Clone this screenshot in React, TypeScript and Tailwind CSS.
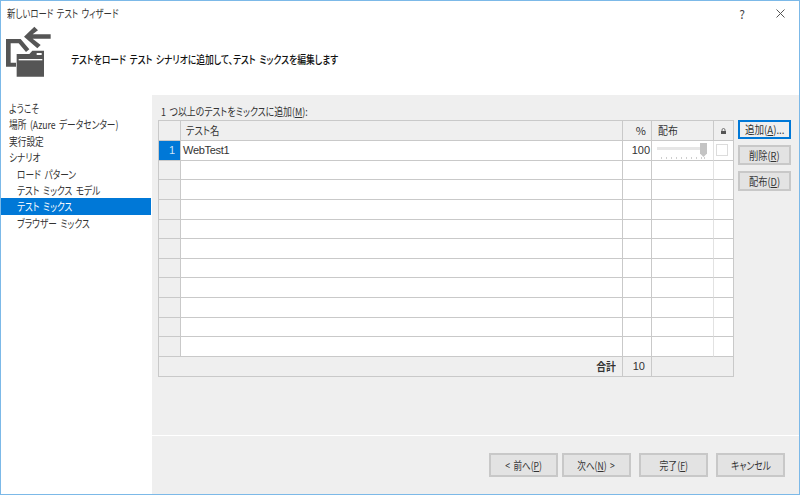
import React from "react";

const cols = "grid-cols-[22px_442px_29px_62px_20px]";

function Btn({ children, primary, className = "", fit = "scale-x-[0.8]" }: { children: React.ReactNode; primary?: boolean; className?: string; fit?: string }) {
  return (
    <div className={`flex items-center justify-center border-2 text-[11px] text-[#333] whitespace-nowrap ${primary ? "border-[#0078d7] bg-[#efefef]" : "border-[#c8c8c8] bg-[#e3e3e3]"} ${className}`}>
      <span className={`inline-block ${fit}`}>{children}</span>
    </div>
  );
}

function Cell({ className = "", children }: { className?: string; children?: React.ReactNode }) {
  return <div className={`border-r border-b min-h-0 overflow-hidden text-[11px] text-[#333] ${className.includes("border-r-") ? "border-b-[#c9c9c9]" : "border-[#c9c9c9]"} ${className}`}>{children}</div>;
}

function NavItem({ children, indent, active }: { children: React.ReactNode; indent?: boolean; active?: boolean }) {
  return (
    <div className={`h-[16.4px] leading-[16px] text-[11px] whitespace-nowrap ${indent ? "pl-[16px]" : "pl-[8px]"} ${active ? "bg-[#0078d7] text-white" : "text-[#333]"}`}>
      <span className="inline-block origin-left scale-x-[0.79]">{children}</span>
    </div>
  );
}

export default function App() {
  const rows = Array.from({ length: 10 });
  return (
    <div className="w-[800px] h-[495px] overflow-hidden border border-[#7cb9e8] bg-white flex flex-col [word-spacing:2px] [font-feature-settings:'palt'] font-['Noto_Sans_CJK_JP','Liberation_Sans',sans-serif]">
      <div className="h-[94px] shrink-0 flex flex-col relative">
        <div className="h-[25px] flex items-center pl-[6px] text-[11px] text-[#333]">
          <span className="inline-block origin-left scale-x-[0.76]">新しいロード テスト ウィザード</span>
          <div className="ml-auto flex items-center">
            <span className="text-[12px] text-[#444] mr-[31px]">?</span>
            <svg width="9" height="9" viewBox="0 0 9 9" className="mr-[14px]"><path d="M0.5 0.5 L8.5 8.5 M8.5 0.5 L0.5 8.5" stroke="#555" strokeWidth="1" fill="none" /></svg>
          </div>
        </div>
        <div className="flex items-start">
          <svg width="48" height="52" viewBox="15 18 144 156" className="ml-[4px] shrink-0">
            <path d="M72 50 L103 20 L114 31 L98 43 H152 V56 H98 L122 75 L112 85 Z" fill="#555" />
            <path d="M18 57 H62 L88 88 L78 96 L56 70 H32 V128 H48 V140 H18 Z" fill="#555" />
            <path d="M50 102 H88 L97 92 H132 V170 H50 Z" fill="#555" />
            <rect x="56" y="117" width="71" height="4" fill="#fff" />
            <rect x="110" y="99" width="15" height="6" fill="#fff" />
          </svg>
          <div className="ml-[18px] mt-[25px] text-[11px] font-medium text-[#111] whitespace-nowrap origin-left scale-x-[0.8]">テストをロード テスト シナリオに追加して、テスト ミックスを編集します</div>
        </div>
      </div>
      <div className="flex-1 flex min-h-0">
        <div className="w-[150px] shrink-0 pt-[5px]">
          <NavItem>ようこそ</NavItem>
          <NavItem>場所 (Azure データセンター)</NavItem>
          <NavItem>実行設定</NavItem>
          <NavItem>シナリオ</NavItem>
          <NavItem indent>ロード パターン</NavItem>
          <NavItem indent>テスト ミックス モデル</NavItem>
          <NavItem indent active>テスト ミックス</NavItem>
          <NavItem indent>ブラウザー ミックス</NavItem>
        </div>
        <div className="flex-1 ml-[1px] bg-[#efefef] flex flex-col min-w-0">
          <div className="h-[341px] shrink-0 pl-[6px] flex flex-col border-b border-white">
            <div className="h-[25px] pl-[3px] pt-[8px] text-[11px] leading-[16px] text-[#333] whitespace-nowrap">
              <span className="inline-block origin-left scale-x-[0.81]">1 つ以上のテストをミックスに追加(<span className="underline">M</span>):</span>
            </div>
            <div className="flex">
              <div className={`w-[576px] h-[257px] grid ${cols} grid-rows-[20px_repeat(11,1fr)_20px] border-l border-t border-[#c9c9c9] bg-white`}>
                <Cell className="bg-[#efefef]" />
                <Cell className="bg-[#efefef] pl-[5px] leading-[18px]"><span className="inline-block origin-left scale-x-[0.85]">テスト名</span></Cell>
                <Cell className="bg-[#efefef] text-right pr-[5px] leading-[18px]">%</Cell>
                <Cell className="bg-[#efefef] pl-[6px] leading-[18px]"><span className="inline-block origin-left scale-x-[0.9]">配布</span></Cell>
                <Cell className="bg-[#efefef] flex items-center justify-center">
                  <svg width="5" height="6" viewBox="0 0 5 6"><path d="M1 3V2a1.5 1.5 0 0 1 3 0V3" stroke="#555" fill="none" strokeWidth="0.8" /><rect x="0" y="3" width="5" height="3" fill="#555" /></svg>
                </Cell>

                <Cell className="bg-[#0078d7] text-[#cfe4f7] text-right pr-[5px] leading-[19px] text-[10px] font-['Liberation_Sans']">1</Cell>
                <Cell className="pl-[2px] leading-[19px] font-['Liberation_Sans'] text-[10px] tracking-[-0.3px]">WebTest1</Cell>
                <Cell className="text-right pr-[1px] leading-[19px] font-['Liberation_Sans'] text-[10.5px]">100</Cell>
                <Cell className="relative border-r-[#e2e2e2]">
                  <div className="absolute left-[5px] top-[6px] w-[46px] h-[3px] bg-[#e6e6e6]" />
                  <div className="absolute left-[48px] top-[2px] w-[7px] h-[14px] bg-[#c4c4c4] [clip-path:polygon(0_0,100%_0,100%_75%,50%_100%,0_75%)]" />
                  <svg width="48" height="3" className="absolute left-[9px] top-[16px]">
                    {[0, 5, 10, 15, 20, 25, 30, 35, 40, 43].map((x) => (
                      <rect key={x} x={x} y="0" width="1" height="2" fill="#cfcfcf" />
                    ))}
                  </svg>
                </Cell>
                <Cell className="relative">
                  <div className="absolute left-[2px] top-[3px] w-[12px] h-[12px] bg-white border border-[#dcdcdc]" />
                </Cell>

                {rows.map((_, i) => (
                  <React.Fragment key={i}>
                    <Cell className="bg-[#efefef]" />
                    <Cell />
                    <Cell />
                    <Cell className="border-r-[#e2e2e2]" />
                    <Cell />
                  </React.Fragment>
                ))}

                <Cell className="col-span-2 bg-[#efefef] text-right pr-[6px] font-bold leading-[19px] text-[#222]"><span className="inline-block origin-right scale-x-[0.9]">合計</span></Cell>
                <Cell className="bg-[#efefef] text-right pr-[6px] leading-[19px] font-['Liberation_Sans'] text-[10px]">10</Cell>
                <Cell className="col-span-2 bg-[#efefef]" />
              </div>
              <div className="ml-[4px] flex flex-col gap-[6px]">
                <Btn primary className="w-[53px] h-[19px]" fit="scale-x-[0.87]">追加(<span className="underline">A</span>)...</Btn>
                <Btn className="w-[53px] h-[20px]" fit="scale-x-[0.84]">削除(<span className="underline">R</span>)</Btn>
                <Btn className="w-[53px] h-[20px]" fit="scale-x-[0.84]">配布(<span className="underline">D</span>)</Btn>
              </div>
            </div>
          </div>
          <div className="flex-1 flex items-start pt-[17px] pl-[337px]">
            <Btn className="w-[69px] h-[24px]" fit="scale-x-[0.78]">&lt; 前へ(<span className="underline">P</span>)</Btn>
            <Btn className="w-[69px] h-[24px] ml-[4px]" fit="scale-x-[0.78]">次へ(<span className="underline">N</span>) &gt;</Btn>
            <Btn className="w-[69px] h-[24px] ml-[8px]">完了(<span className="underline">F</span>)</Btn>
            <Btn className="w-[69px] h-[24px] ml-[8px]">キャンセル</Btn>
          </div>
        </div>
      </div>
    </div>
  );
}
